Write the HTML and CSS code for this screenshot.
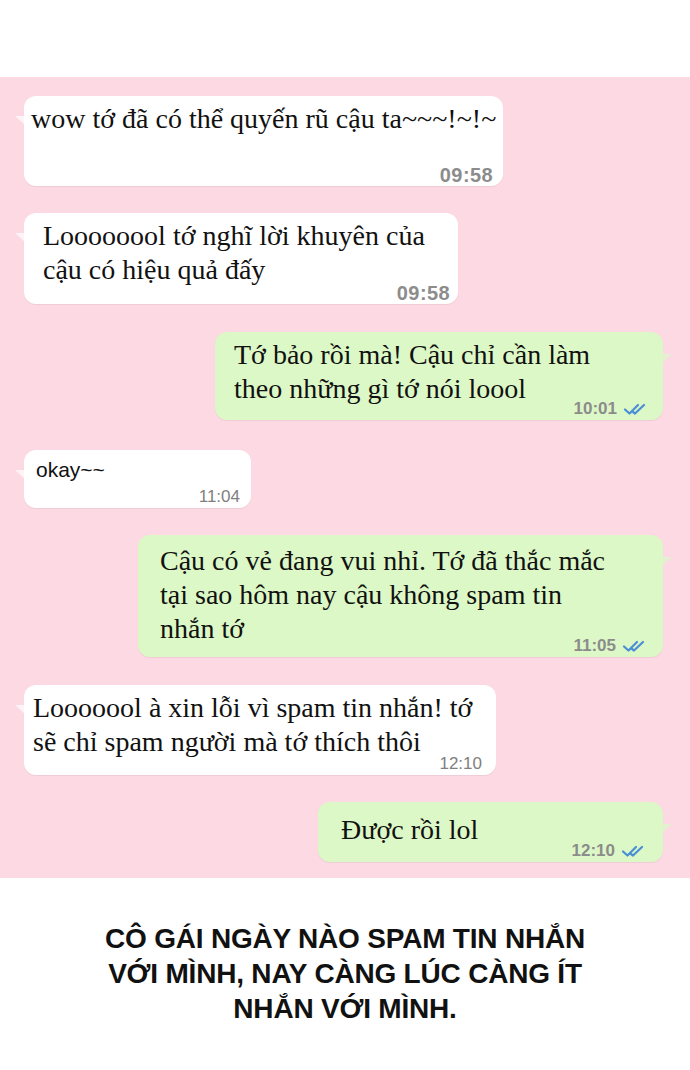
FILE: index.html
```html
<!DOCTYPE html>
<html lang="vi">
<head>
<meta charset="utf-8">
<title>Chat</title>
<link rel="stylesheet" href="styles.css">
</head>
<body>
<div class="top-space"></div>
<section class="chat">
  <div class="row in m1">
    <div class="bubble">
      <p class="text serif">wow tớ đã có thể quyến rũ cậu ta~~~!~!~</p>
      <div class="meta"><span class="time big">09:58</span></div>
    </div>
  </div>
  <div class="row in m2">
    <div class="bubble">
      <p class="text serif">Loooooool tớ nghĩ lời khuyên của<br>cậu có hiệu quả đấy</p>
      <div class="meta"><span class="time big">09:58</span></div>
    </div>
  </div>
  <div class="row out m3">
    <div class="bubble">
      <p class="text serif">Tớ bảo rồi mà! Cậu chỉ cần làm<br>theo những gì tớ nói loool</p>
      <div class="meta"><span class="time">10:01</span><svg class="ticks" viewBox="0 0 30 14"><path d="M2 7.5 L6.5 11.5 L15 3 M10 10 L12 11.5 L21 3" fill="none" stroke="#4a8ed6" stroke-width="2.2" stroke-linecap="round" stroke-linejoin="round"/></svg></div>
    </div>
  </div>
  <div class="row in m4">
    <div class="bubble">
      <p class="text sans">okay~~</p>
      <div class="meta"><span class="time light">11:04</span></div>
    </div>
  </div>
  <div class="row out m5">
    <div class="bubble">
      <p class="text serif">Cậu có vẻ đang vui nhỉ. Tớ đã thắc mắc<br>tại sao hôm nay cậu không spam tin<br>nhắn tớ</p>
      <div class="meta"><span class="time">11:05</span><svg class="ticks" viewBox="0 0 30 14"><path d="M2 7.5 L6.5 11.5 L15 3 M10 10 L12 11.5 L21 3" fill="none" stroke="#4a8ed6" stroke-width="2.2" stroke-linecap="round" stroke-linejoin="round"/></svg></div>
    </div>
  </div>
  <div class="row in m6">
    <div class="bubble">
      <p class="text serif">Looooool à xin lỗi vì spam tin nhắn! tớ<br>sẽ chỉ spam người mà tớ thích thôi</p>
      <div class="meta"><span class="time light">12:10</span></div>
    </div>
  </div>
  <div class="row out m7">
    <div class="bubble">
      <p class="text serif">Được rồi lol</p>
      <div class="meta"><span class="time">12:10</span><svg class="ticks" viewBox="0 0 30 14"><path d="M2 7.5 L6.5 11.5 L15 3 M10 10 L12 11.5 L21 3" fill="none" stroke="#4a8ed6" stroke-width="2.2" stroke-linecap="round" stroke-linejoin="round"/></svg></div>
    </div>
  </div>
</section>
<p class="caption">CÔ GÁI NGÀY NÀO SPAM TIN NHẮN<br>VỚI MÌNH, NAY CÀNG LÚC CÀNG ÍT<br>NHẮN VỚI MÌNH.</p>
</body>
</html>
```

FILE: styles.css
```css
html, body {
  margin: 0;
  padding: 0;
  background: #ffffff;
}
body {
  width: 690px;
  height: 1070px;
  overflow: hidden;
}
.top-space {
  height: 77px;
}
.chat {
  background: #fcd9e3;
  height: 801px;
  box-sizing: border-box;
  padding: 19px 0 0 0;
  display: flex;
  flex-direction: column;
}
.row {
  display: flex;
}
.row.in {
  justify-content: flex-start;
  padding-left: 24px;
}
.row.out {
  justify-content: flex-end;
  padding-right: 27px;
}
.bubble {
  position: relative;
  box-sizing: border-box;
  border-radius: 12px;
  box-shadow: 0 1px 1px rgba(0, 0, 0, 0.06);
  display: flex;
  flex-direction: column;
  padding-bottom: 2px;
}
.in .bubble {
  background: #ffffff;
}
.out .bubble {
  background: #dcf8c6;
}
.in .bubble::before {
  content: "";
  position: absolute;
  left: -9px;
  top: 20px;
  border-style: solid;
  border-width: 0 10px 9px 0;
  border-color: transparent #ffffff transparent transparent;
  opacity: 0.7;
}
.out .bubble::after {
  content: "";
  position: absolute;
  right: -9px;
  top: 22px;
  border-style: solid;
  border-width: 0 0 9px 10px;
  border-color: transparent transparent transparent #dcf8c6;
  opacity: 0.7;
}
.text {
  margin: 0;
  color: #111111;
  white-space: nowrap;
  flex: 1 1 auto;
  min-height: 0;
}
.serif {
  font-family: "Liberation Serif", "Times New Roman", serif;
  font-size: 28px;
  line-height: 34px;
}
.sans {
  font-family: "Liberation Sans", Arial, sans-serif;
  font-size: 21px;
  line-height: 28px;
}
.meta {
  flex: 0 0 18px;
  display: flex;
  justify-content: flex-end;
  align-items: center;
  gap: 6px;
  height: 18px;
}
.time {
  font-family: "Liberation Sans", Arial, sans-serif;
  font-size: 17px;
  font-weight: bold;
  color: #8c8c8c;
  line-height: 18px;
}
.time.big {
  font-size: 20px;
  letter-spacing: 0.4px;
}
.time.light {
  font-weight: normal;
  color: #808080;
}
.ticks {
  width: 30px;
  height: 14px;
}

/* per-message geometry */
.m1 .bubble {
  width: 479px;
  height: 90px;
  padding-top: 6px;
  padding-left: 7px;
  padding-right: 10px;
}
.m2 {
  margin-top: 27px;
}
.m2 .bubble {
  width: 434px;
  height: 91px;
  padding-top: 6px;
  padding-left: 19px;
  padding-right: 8px;
}
.m3 {
  margin-top: 28px;
}
.m3 .bubble {
  width: 448px;
  height: 88px;
  padding-top: 6px;
  padding-left: 19px;
  padding-right: 10px;
}
.m4 {
  margin-top: 30px;
}
.m4 .bubble {
  width: 227px;
  height: 58px;
  padding-top: 6px;
  padding-left: 12px;
  padding-right: 11px;
}
.m5 {
  margin-top: 27px;
}
.m5 .bubble {
  width: 525px;
  height: 122px;
  padding-top: 9px;
  padding-left: 22px;
  padding-right: 11px;
}
.m6 {
  margin-top: 28px;
}
.m6 .bubble {
  width: 472px;
  height: 90px;
  padding-top: 6px;
  padding-left: 9px;
  padding-right: 14px;
}
.m7 {
  margin-top: 27px;
}
.m7 .bubble {
  width: 345px;
  height: 60px;
  padding-top: 11px;
  padding-left: 23px;
  padding-right: 12px;
}
.caption {
  margin: 43px 0 0 0;
  text-align: center;
  font-family: "Liberation Sans", Arial, sans-serif;
  font-weight: bold;
  font-size: 28px;
  line-height: 35px;
  color: #111111;
  letter-spacing: -0.2px;
}
```
